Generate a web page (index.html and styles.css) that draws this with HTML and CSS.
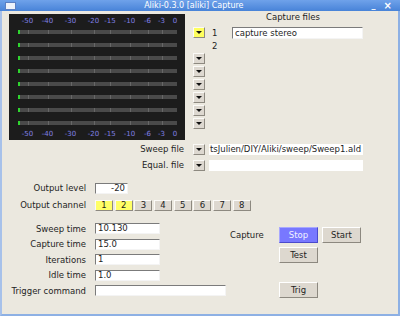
FILE: index.html
```html
<!DOCTYPE html>
<html>
<head>
<meta charset="utf-8">
<title>Aliki Capture</title>
<link rel="stylesheet" href="styles.css">
</head>
<body>
<div class="win">
  <div class="titlebar">
    <span class="tb-icon"></span>
    <span class="tb-title">Aliki-0.3.0 [aliki] Capture</span>
    <span class="tb-btns"><span class="tb-min">_</span><span class="tb-close">×</span></span>
  </div>
  <div class="body">
    <div class="top">
      <svg class="meter" width="176" height="126" viewBox="0 0 176 126">
        <defs>
          <g id="bar">
            <rect class="bar-bg" x="9" y="0" width="159" height="4"/>
            <path class="bar-tick" d="M19.5 0v4M39.5 0v4M62.5 0v4M85.5 0v4M101.5 0v4M121.5 0v4M139.5 0v4M153.5 0v4"/>
            <rect class="bar-lvl" x="9" y="0" width="2" height="4"/>
          </g>
        </defs>
        <rect class="meter-bg" x="0" y="0" width="176" height="126"/>
        <g class="scale">
          <text x="18.5" y="9">-50</text>
          <text x="38.5" y="9">-40</text>
          <text x="61.5" y="9">-30</text>
          <text x="84.5" y="9">-20</text>
          <text x="101" y="9">-15</text>
          <text x="120.5" y="9">-10</text>
          <text x="138.5" y="9">-6</text>
          <text x="152.5" y="9">-3</text>
          <text x="166" y="9">0</text>
          <text x="18.5" y="122">-50</text>
          <text x="38.5" y="122">-40</text>
          <text x="61.5" y="122">-30</text>
          <text x="84.5" y="122">-20</text>
          <text x="101" y="122">-15</text>
          <text x="120.5" y="122">-10</text>
          <text x="138.5" y="122">-6</text>
          <text x="152.5" y="122">-3</text>
          <text x="166" y="122">0</text>
        </g>
        <use href="#bar" y="16"/>
        <use href="#bar" y="29"/>
        <use href="#bar" y="42"/>
        <use href="#bar" y="55"/>
        <use href="#bar" y="68"/>
        <use href="#bar" y="81"/>
        <use href="#bar" y="94"/>
        <use href="#bar" y="107"/>
      </svg>
      <div class="chan">
        <div class="chan-head">Capture files</div>
        <div class="dd yellow"></div>
        <div class="num">1</div>
        <div class="fld cfile">capture stereo</div>
        <div class="num">2</div>
        <div class="dd"></div>
        <div class="dd"></div>
        <div class="dd"></div>
        <div class="dd"></div>
        <div class="dd"></div>
        <div class="dd"></div>
      </div>
    </div>

    <div class="files">
      <div class="lbl">Sweep file</div>
      <div class="dd"></div>
      <div class="fld path">tsJulien/DIY/Aliki/sweep/Sweep1.ald</div>
      <div class="lbl">Equal. file</div>
      <div class="dd"></div>
      <div class="fld path"></div>
    </div>

    <div class="output">
      <div class="lbl">Output level</div>
      <div class="fld lvl">-20</div>
      <div class="lbl">Output channel</div>
      <div class="chs">
        <span class="cb on">1</span>
        <span class="cb on">2</span>
        <span class="cb">3</span>
        <span class="cb">4</span>
        <span class="cb">5</span>
        <span class="cb">6</span>
        <span class="cb">7</span>
        <span class="cb">8</span>
      </div>
    </div>

    <div class="bottom">
      <div class="params">
        <div class="lbl">Sweep time</div>
        <div class="fld pv">10.130</div>
        <div class="lbl">Capture time</div>
        <div class="fld pv">15.0</div>
        <div class="lbl">Iterations</div>
        <div class="fld pv">1</div>
        <div class="lbl">Idle time</div>
        <div class="fld pv">1.0</div>
        <div class="lbl">Trigger command</div>
        <div class="fld trig"></div>
      </div>
      <div class="actions">
        <div class="act-lbl">Capture</div>
        <button class="btn stop">Stop</button>
        <button class="btn">Start</button>
        <button class="btn test">Test</button>
        <button class="btn trigb">Trig</button>
      </div>
    </div>
  </div>
</div>
</body>
</html>
```
FILE: styles.css
```css
* { box-sizing: border-box; }

body {
  margin: 0;
  font-family: "DejaVu Sans", "Liberation Sans", sans-serif;
  font-size: 8.5px;
  color: #1e1e1e;
}

.win {
  width: 400px;
  height: 316px;
  display: flex;
  flex-direction: column;
  overflow: hidden;
}

.titlebar {
  height: 11px;
  flex: none;
  display: flex;
  align-items: center;
  background: linear-gradient(#6fa2ea, #4883d8);
  color: #fff;
}

.tb-icon {
  width: 11px;
  height: 8px;
  margin-left: 5px;
  background: #eef2fa;
  border: 1px solid #5b7fc2;
}

.tb-title {
  flex: 1;
  text-align: center;
  font-size: 8px;
  line-height: 11px;
  white-space: nowrap;
}

.tb-btns {
  display: flex;
  align-items: center;
  gap: 8px;
  margin-right: 8px;
  line-height: 11px;
}

.tb-min { font-size: 8px; font-weight: bold; }
.tb-close { font-size: 10px; font-weight: bold; }

.body {
  flex: 1;
  background: #ebe8df;
  border-left: 2px solid #a7c1ea;
  border-right: 2px solid #8db0e4;
  border-bottom: 2px solid #8db0e4;
  padding-left: 7px;
}

/* top area */
.top {
  display: flex;
  align-items: flex-start;
  height: 129px;
}

.meter {
  display: block;
  flex: none;
  margin-top: 3px;
}

.meter-bg { fill: #1c1c1c; }
.bar-bg { fill: #4a4a4a; }
.bar-tick { stroke: #676767; stroke-width: 1; }
.bar-lvl { fill: #2fd52f; }

.scale text {
  font-family: "DejaVu Sans", sans-serif;
  font-size: 7px;
  fill: #8080e6;
  text-anchor: middle;
}

.chan {
  margin-left: 8px;
  display: grid;
  grid-template-columns: 12px 27px 131px;
  grid-template-rows: 15px;
  grid-auto-rows: 13px;
}

.chan-head {
  grid-column: 1 / -1;
  padding-left: 30px;
  text-align: center;
  line-height: 12px;
}

.chan .dd { grid-column: 1; align-self: center; }
.chan .num { grid-column: 2; padding-left: 7px; align-self: center; line-height: 12px; }
.chan .fld { grid-column: 3; align-self: center; }

/* widgets */
.dd {
  width: 12px;
  height: 11px;
  background: #ddd8d0;
  border: 1px solid;
  border-color: #fbfaf7 #8d8980 #8d8980 #fbfaf7;
  display: flex;
  align-items: center;
  justify-content: center;
}

.dd::after {
  content: "";
  border-left: 3px solid transparent;
  border-right: 3px solid transparent;
  border-top: 3px solid #111;
}

.dd.yellow { background: #ffff5e; }

.fld {
  height: 11px;
  background: #fff;
  border: 1px solid;
  border-color: #7b7b7b #f4f4f4 #f4f4f4 #7b7b7b;
  padding: 0 2px;
  line-height: 9px;
  white-space: nowrap;
  overflow: hidden;
}

.cfile { width: 131px; height: 12px; line-height: 10px; }

.lbl {
  text-align: right;
  padding-right: 9px;
  white-space: nowrap;
}

/* file rows */
.files {
  display: grid;
  grid-template-columns: 184px 12px 158px;
  grid-auto-rows: 16px;
  align-items: center;
  margin-top: 1px;
}

.files .fld {
  margin-left: 4px;
  width: 154px;
  border: none;
  padding-left: 1px;
  line-height: 11px;
}

/* output rows */
.output {
  display: grid;
  grid-template-columns: 86px auto;
  grid-auto-rows: 16px;
  row-gap: 1px;
  align-items: center;
  justify-items: start;
  margin-top: 7px;
}

.lvl { width: 33px; text-align: right; }

.chs { display: flex; gap: 1.7px; }

.cb {
  width: 18px;
  height: 11px;
  background: #ddd8d0;
  border: 1px solid;
  border-color: #fbfaf7 #8d8980 #8d8980 #fbfaf7;
  text-align: center;
  line-height: 9px;
}

.cb.on { background: #ffff66; }

/* bottom */
.bottom {
  display: flex;
  margin-top: 8px;
}

.params {
  width: 221px;
  display: grid;
  grid-template-columns: 86px auto;
  grid-auto-rows: 15.5px;
  align-items: center;
  justify-items: start;
}

.params .lbl { justify-self: stretch; }
.output .lbl { justify-self: stretch; }

.pv { width: 65px; }
.trig { width: 131px; }

.actions {
  display: grid;
  grid-template-columns: 45px 39px 39px;
  grid-template-rows: 16px 16px 31px;
  column-gap: 4px;
  row-gap: 4px;
  margin-top: 6px;
  align-items: start;
}

.act-lbl { align-self: center; }

.btn {
  font: inherit;
  width: 39px;
  height: 16px;
  padding: 0;
  background: #ddd8cf;
  color: #1e1e1e;
  border: 1px solid;
  border-color: #fff #8c887f #8c887f #fff;
}

.btn.stop {
  background: #7878ff;
  color: #f2f2ff;
  border-color: #a8a8ff #4a4acc #4a4acc #a8a8ff;
}

.btn.test { grid-column: 2; }
.btn.trigb { grid-column: 2; align-self: end; }
```
